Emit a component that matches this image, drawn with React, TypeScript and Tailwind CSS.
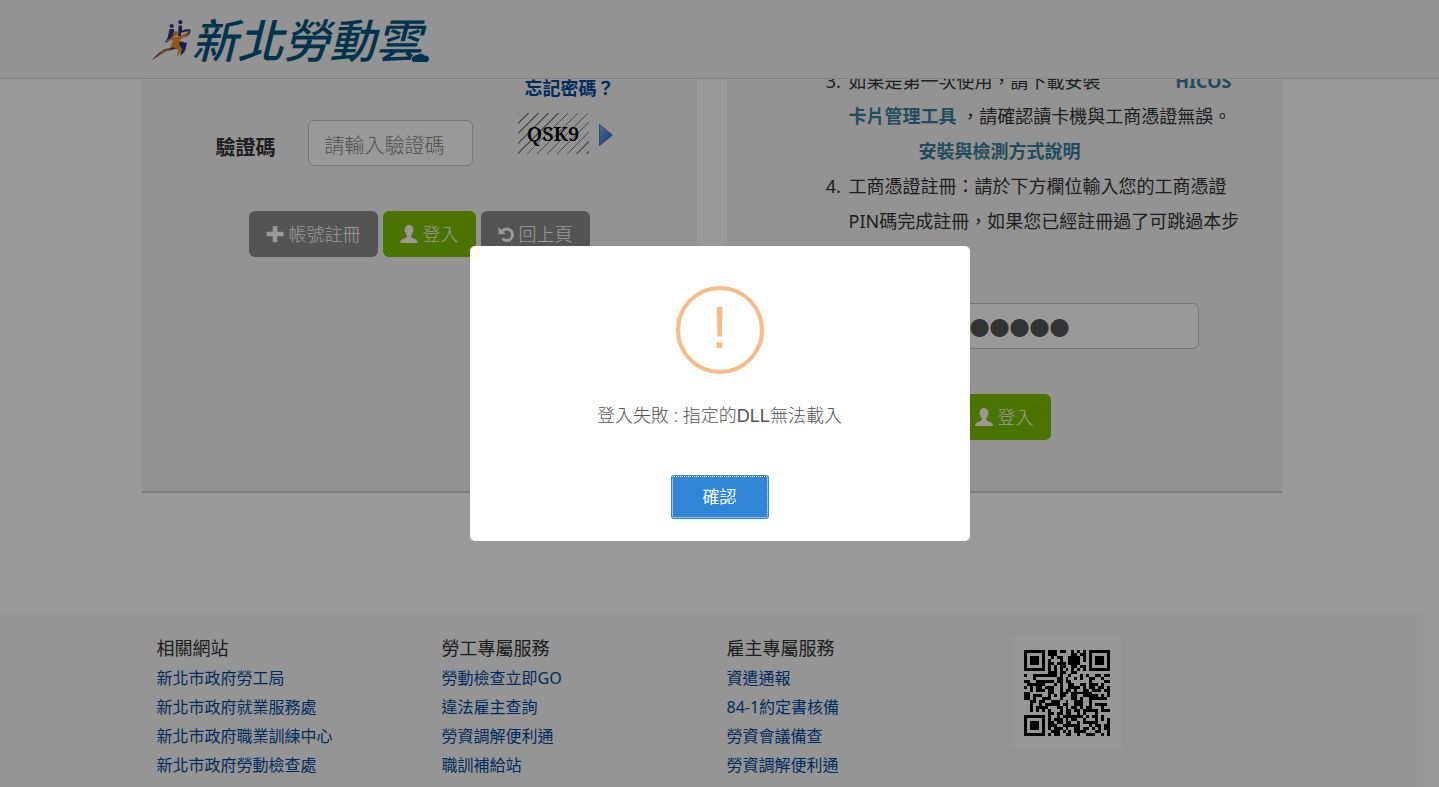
import type { ReactNode } from "react";
import clsx from "clsx";

const footerColumns = [
  {
    title: "相關網站",
    links: [
      "新北市政府勞工局",
      "新北市政府就業服務處",
      "新北市政府職業訓練中心",
      "新北市政府勞動檢查處",
    ],
  },
  {
    title: "勞工專屬服務",
    links: ["勞動檢查立即GO", "違法雇主查詢", "勞資調解便利通", "職訓補給站"],
  },
  {
    title: "雇主專屬服務",
    links: ["資遣通報", "84-1約定書核備", "勞資會議備查", "勞資調解便利通"],
  },
];

const qrRows = [
  "#######.###.##..#.#.#.#######",
  "#.....#.###.....##.##.#.....#",
  "#.###.#..#.##..####.#.#.###.#",
  "#.###.#.#...#..####.#.#.###.#",
  "#.###.#.##.###.####...#.###.#",
  "#.....#.#.#.##..##.##.#.....#",
  "#######.#.#.#.#.#.#.#.#######",
  "........###.##..##...........",
  "#..########.#..#...#.#..##.##",
  "...#.......##.#..#.#..##..#..",
  "##..######.##.##......#....##",
  ".######...#.#..##..##.###.#..",
  "#.#.##.###..#..####.#.##.##.#",
  "..#.###.##..#.##.#..##.###.##",
  "##......##..###.#######.....#",
  "##.###..#.#.##..##..#####.#.#",
  "##.#..###...#...##.#..######.",
  "..##.##..###..#..###..#......",
  "..#..#.#####.##..###..#.####.",
  "..#.####...##.#.##.#.##...#..",
  "..#.#.#.#...#.##.##.#####.###",
  "........##.##.##..#.#...#....",
  "#######.#..#.#######.#.##.#.",
  "#.....#.#.###.#.##..#...#.#.#",
  "#.###.#.##.##.##..#.#####...#",
  "#.###.#.###..######...#.##.##",
  "#.###.#.#.###.#..##.##.#.#.##",
  "#.....#..###.#.#.####...##..#",
  "#######.#.##..##..#..###..#.#",
];

function QrCode() {
  return (
    <svg
      viewBox="0 0 29 29"
      className="size-[86px]"
      shapeRendering="crispEdges"
      role="img"
      aria-label="QR code"
    >
      {qrRows.map((row, y) =>
        row
          .split("")
          .map((cell, x) =>
            cell === "#" ? (
              <rect key={`${x}-${y}`} x={x} y={y} width="1" height="1" />
            ) : null
          )
      )}
    </svg>
  );
}

function PlusIcon() {
  return (
    <svg viewBox="0 0 18 18" className="size-[18px] fill-current">
      <path d="M7.3 1h3.4q.6 0 .6.6v5.100h5.600q.6 0 .6.6v3.400q0 .6-.6.6h-5.600v5.400q0 .6-.6.6H7.300q-.6 0-.6-.6v-5.400H1.100q-.6 0-.6-.6V7.300q0-.6.6-.6h5.600V1.600q0-.6.6-.6z" />
    </svg>
  );
}

function UserIcon() {
  return (
    <svg viewBox="0 0 18 18" className="size-[18px] fill-current">
      <path d="M9 0c2.600 0 4.300 1.800 4.300 4.600 0 .6.3.8.2 1.500-.1.800-.6 1-.8 1.500-.3 1.200-.8 2.100-1.600 2.800v1.300c0 .8 5.100 2.300 6.200 4.100.4.600.7 1.300.7 2.200H0c0-.9.3-1.600.7-2.200C1.800 14 6.900 12.500 6.900 11.700v-1.300C6.100 9.700 5.600 8.800 5.300 7.600c-.2-.5-.7-.7-.8-1.500-.1-.7.2-.9.2-1.500C4.700 1.800 6.400 0 9 0z" />
    </svg>
  );
}

function BackIcon() {
  return (
    <svg viewBox="0 0 16 16" className="size-4">
      <path
        d="M4.600 4.900A5.700 5.700 0 1 1 4.400 12.400"
        className="fill-none stroke-current"
        strokeWidth="3"
      />
      <path d="M.5 1v7.200h7.200z" className="fill-current" />
    </svg>
  );
}

function RunnerLogo() {
  return (
    <svg viewBox="0 0 40 42" className="h-[42px] w-10 shrink-0">
      <g className="fill-[#3a3187]">
        <circle cx="19.700" cy="6" r="2.100" />
        <circle cx="28.300" cy="2.200" r="2.100" />
        <path d="M17.500 9h4.500v6l-3 3-2 3-4 2 2.500-5z" />
        <path d="M26.500 5.500h3.500v5q5-2 8.500-1 1 4-4.500 7l-3 1q6-4 4.500-6-3-.5-6.500 1.500v6l-3-3z" />
        <path d="M0 40q6-7 12-10.500l7-2 3-4 2.500 5-11 3z" />
        <path d="M27 21l8 2-2 8-4.500 5 1-8-3-2z" />
      </g>
      <g className="fill-[#f5941e]">
        <circle cx="23.700" cy="13.500" r="2.400" />
        <path d="M11 20.500q5 1 10-4l5 .5 8-4 4-3q-1 4-10 10l-1 4 3 6-5 7 1-7-5-3-6 4-12 7 8-7 7-3 3-8q-8 2-10 .5z" />
      </g>
    </svg>
  );
}

function BigButton({
  green,
  icon,
  children,
}: {
  green?: boolean;
  icon: ReactNode;
  children: ReactNode;
}) {
  return (
    <button
      type="button"
      className={clsx(
        "flex h-[46px] items-center gap-[5px] rounded-md px-[17px] text-lg font-light text-white",
        green ? "bg-[#7dc000]" : "bg-[#8c8c8c]"
      )}
    >
      {icon}
      {children}
    </button>
  );
}

function Header() {
  return (
    <header className="fixed inset-x-0 top-0 z-10 h-[79px] border-b border-[#dcdcdc] bg-[#f5f5f5] pr-4">
      <a
        href="#main"
        className="absolute top-1 left-0 text-base font-bold text-[#fafafa]"
      >
        :::
      </a>
      <div className="mx-auto max-w-[1140px] px-[10px] pt-5">
        <a href="#home" className="relative flex w-fit items-start">
          <RunnerLogo />
          <span className="-mt-[3px] text-[46px] leading-[46px] font-medium text-[#005880] italic">
            新北勞動雲
          </span>
          <svg
            viewBox="0 0 20 12"
            className="absolute -right-2 bottom-0 h-3 w-5 fill-[#005880] stroke-[#f5f5f5]"
          >
            <path d="M4 11.500a3.400 3.400 0 0 1-.6-6.500A4.600 4.600 0 0 1 7.500 3.500 5 5 0 0 1 15 4.500a3.500 3.500 0 0 1 1.500 7z" />
          </svg>
        </a>
      </div>
    </header>
  );
}

function AccountPanel() {
  return (
    <section className="border-b-2 border-[#cfcfcf] bg-[#f5f5f5] pt-[71px]">
      <div className="pl-[383px]">
        <a href="#forgot" className="text-lg leading-[35px] font-bold text-[#004a9c]">
          忘記密碼？
        </a>
      </div>
      <div className="mt-[7px] flex pl-[74px]">
        <label
          htmlFor="captcha"
          className="mt-[20px] mr-8 text-xl leading-[30px] font-bold text-[#333]"
        >
          驗證碼
        </label>
        <input
          id="captcha"
          placeholder="請輸入驗證碼"
          className="mt-[7px] h-[46px] w-[165px] rounded-md border border-[#c4c4c4] bg-white px-4 pt-1 text-xl placeholder:font-light placeholder:text-[#888]"
        />
        <div className="ml-[45px] grid h-[41px] w-[71px] place-items-center bg-[repeating-linear-gradient(135deg,#888_0px,#888_1px,transparent_1px,transparent_7px)] font-['Noto_Serif','Liberation_Serif',serif] text-xl font-semibold text-black">
          QSK9
        </div>
        <button type="button" aria-label="播放驗證碼" className="mt-[11px] ml-[10px] h-[22px]">
          <svg viewBox="0 0 14 22" className="h-[22px] w-[14px]">
            <defs>
              <linearGradient id="play" x1="0" y1="0" x2="1" y2="1">
                <stop offset="0" stopColor="#7fb2ee" />
                <stop offset="1" stopColor="#2a62b5" />
              </linearGradient>
            </defs>
            <path d="M.5.5l13 10.500-13 10.500z" fill="url(#play)" stroke="#4a7cc4" />
          </svg>
        </button>
      </div>
      <div className="mt-[45px] flex justify-center gap-[5px] pb-[234px]">
        <BigButton icon={<PlusIcon />}>帳號註冊</BigButton>
        <BigButton green icon={<UserIcon />}>
          登入
        </BigButton>
        <BigButton icon={<BackIcon />}>回上頁</BigButton>
      </div>
    </section>
  );
}

function CertificatePanel() {
  return (
    <section className="border-b-2 border-[#cfcfcf] bg-[#f5f5f5] pt-[64px]">
      <ol
        start={3}
        className="list-decimal pr-[40px] pl-[119px] text-lg leading-[35px] text-[#333]"
      >
        <li className="pl-[3px]">
          如果是第一次使用，請下載安裝{" "}
          <a href="#hicos" className="ml-[70px] font-bold text-[#3a7f9c]">
            HICOS
            <br />
            卡片管理工具
          </a>{" "}
          ，請確認讀卡機與工商憑證無誤。
          <br />
          <a href="#setup" className="ml-[70px] font-bold text-[#3a7f9c]">
            安裝與檢測方式說明
          </a>
        </li>
        <li className="pl-[3px]">
          工商憑證註冊：請於下方欄位輸入您的工商憑證
          <br />
          PIN碼完成註冊，如果您已經註冊過了可跳過本步
        </li>
      </ol>
      <div className="mt-[64px] pr-[83px] pl-[166px]">
        <input
          id="pin"
          aria-label="PIN碼"
          readOnly
          value="●●●●●●●●"
          className="block h-[46px] w-full rounded-md border border-[#c4c4c4] bg-white px-4 pt-[2px] text-xl text-[#555]"
        />
      </div>
      <div className="mt-[45px] flex justify-center">
        <BigButton green icon={<UserIcon />}>
          登入
        </BigButton>
      </div>
    </section>
  );
}

function Footer() {
  return (
    <footer className="flex-1 bg-[#f8f8f8] text-base leading-[29px]">
      <div className="mx-auto grid max-w-[1140px] grid-cols-4 pt-[18px]">
        {footerColumns.map((column) => (
          <div key={column.title} className="px-[15px]">
            <h2 className="text-lg leading-8 text-[#333]">{column.title}</h2>
            <ul>
              {column.links.map((link) => (
                <li key={link}>
                  <a href="#link" className="text-[#004a9c]">
                    {link}
                  </a>
                </li>
              ))}
            </ul>
          </div>
        ))}
        <div className="mt-[6px] ml-[15px] size-[110px] bg-[#fcfcfc] p-3">
          <QrCode />
        </div>
      </div>
    </footer>
  );
}

function AlertDialog() {
  return (
    <div className="fixed inset-0 z-20 grid place-items-center bg-black/40">
      <div
        role="alertdialog"
        aria-modal="true"
        aria-describedby="alert-message"
        className="flex w-full max-w-[500px] flex-col items-center rounded-[5px] bg-white px-5 pt-10 pb-[22px]"
      >
        <div className="flex size-[88px] items-start justify-center rounded-full border-4 border-[#f8bb86] font-['Liberation_Sans',sans-serif] text-[60px] leading-[76px] text-[#f8bb86]">
          !
        </div>
        <p
          id="alert-message"
          className="mt-[26px] text-lg leading-[30px] font-light text-[#545454]"
        >
          登入失敗 : 指定的
          <span className="font-['Liberation_Sans',sans-serif] font-normal">DLL</span>
          無法載入
        </p>
        <button
          type="button"
          className="mt-[44px] h-[44px] w-[98px] rounded-[3px] bg-[#3085d6] text-[17px] text-white outline-1 -outline-offset-2 outline-white outline-dotted"
        >
          確認
        </button>
      </div>
    </div>
  );
}

export default function App() {
  return (
    <div className="h-screen overflow-hidden bg-white font-['Noto_Sans','Noto_Sans_CJK_TC',sans-serif]">
      <Header />
      <div className="flex min-h-screen flex-col pr-4">
        <main
          id="main"
          className="mx-auto mb-[121px] grid w-full max-w-[1140px] grid-cols-2 gap-[30px]"
        >
          <AccountPanel />
          <CertificatePanel />
        </main>
        <Footer />
      </div>
      <AlertDialog />
    </div>
  );
}
